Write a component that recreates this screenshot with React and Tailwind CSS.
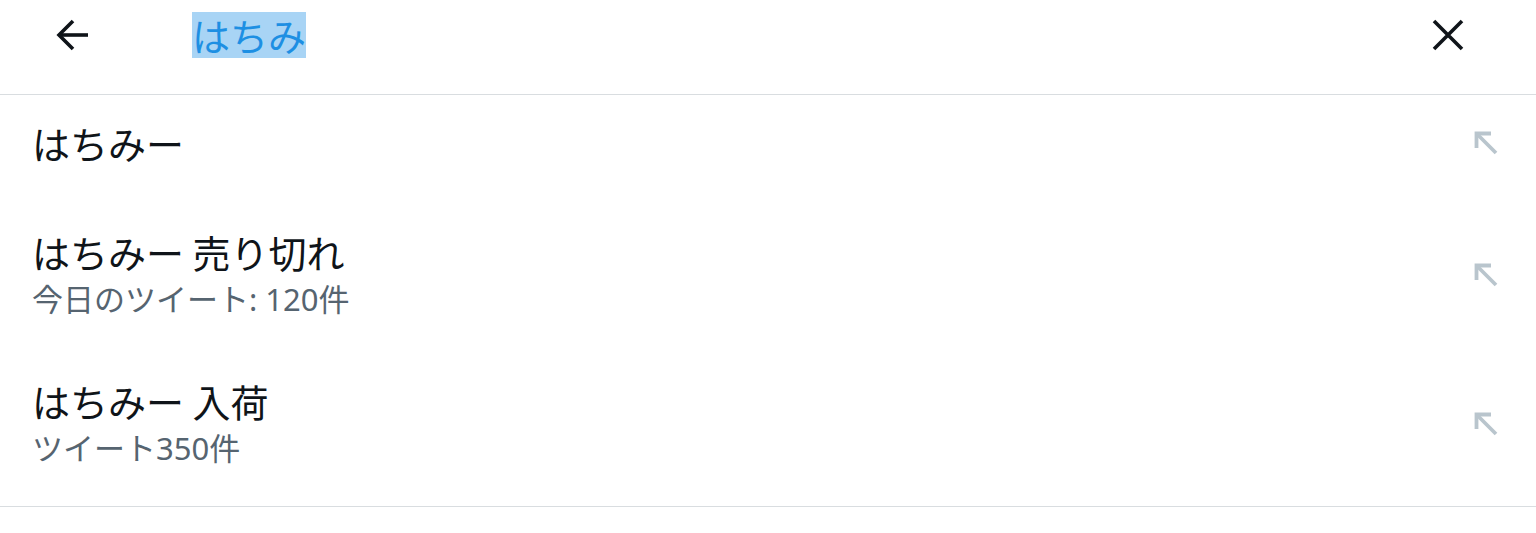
import React from "react";

const font = { fontFamily: '"Noto Sans CJK JP", "Noto Sans", sans-serif' };
const subFont = { fontFamily: '"Noto Sans", "Noto Sans CJK JP", sans-serif' };

function BackIcon() {
  return (
    <svg width="34" height="34" viewBox="0 0 34 34" fill="none" stroke="#0f1419" strokeWidth="3.6">
      <path d="M32 17H3" />
      <path d="M17 3L3 17l14 14" />
    </svg>
  );
}

function CloseIcon() {
  return (
    <svg width="32" height="32" viewBox="0 0 32 32" fill="none" stroke="#0f1419" strokeWidth="3.6">
      <path d="M2 2l28 28M30 2L2 30" />
    </svg>
  );
}

function FillIcon() {
  return (
    <svg width="24" height="24" viewBox="0 0 24 24" fill="none" stroke="#b9c5cd" strokeWidth="3.8">
      <path d="M3 3l19 19" />
      <path d="M2.5 17V2.5H17" />
    </svg>
  );
}

const items = [
  { title: "はちみー" },
  { title: "はちみー 売り切れ", sub: "今日のツイート: 120件" },
  { title: "はちみー 入荷", sub: "ツイート350件" },
];

export default function App() {
  return (
    <div className="w-[1536px] h-[533px] bg-white overflow-hidden" style={font}>
      {/* search bar */}
      <div className="flex items-center h-[95px] pb-[25px] border-b border-[#d9dde0] pl-[56px] pr-[72px]">
        <BackIcon />
        <div className="flex-1 pl-[102px]">
          <span className="bg-[#a8d4f5] text-[#1d8fe3] text-[38px] leading-[46px] inline-block">はちみ</span>
        </div>
        <CloseIcon />
      </div>

      {/* suggestions */}
      <div className="border-b border-[#d9dde0]">
        {items.map((it, i) => (
          <div
            key={i}
            className={`flex items-center justify-between pl-[32px] pr-[38px] ${
              it.sub ? "pt-[26px]" : "pt-[25px]"
            } ${i === 0 ? "pb-[37px]" : i === items.length - 1 ? "pb-[37px]" : "pb-[32px]"}`}
          >
            <div>
              <p className="text-[38px] leading-[46px] text-[#0f1419]">{it.title}</p>
              {it.sub && (
                <p className="text-[31px] leading-[42px] mt-[3px] text-[#566470]" style={subFont}>
                  {it.sub}
                </p>
              )}
            </div>
            <FillIcon />
          </div>
        ))}
      </div>
    </div>
  );
}
